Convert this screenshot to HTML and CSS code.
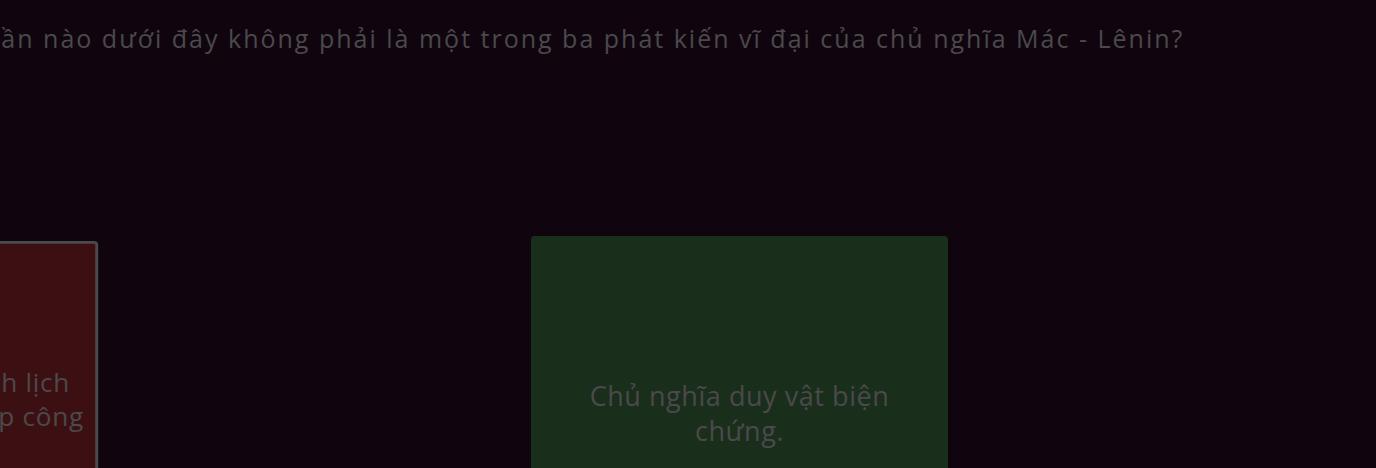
FILE: index.html
```html
<!DOCTYPE html>
<html lang="vi">
<head>
<meta charset="utf-8">
<title>Quiz</title>
<link rel="stylesheet" href="styles.css">
</head>
<body>
<main class="stage">
  <h1 class="question">Phần nào dưới đây không phải là một trong ba phát kiến vĩ đại của chủ nghĩa Mác - Lênin?</h1>
  <div class="answers">
    <div class="card card-wrong">
      <span class="card-text card-text-fixed">Học thuyết về sứ mệnh lịch<br>sử toàn cầu của giai cấp công<br>nhân.</span>
    </div>
    <div class="card card-hidden">
      <span class="card-text">Học thuyết về giá trị thặng dư.</span>
    </div>
    <div class="card card-correct">
      <span class="card-text">Chủ nghĩa duy vật biện chứng.</span>
    </div>
  </div>
</main>
</body>
</html>
```
FILE: styles.css
```css
html, body {
  margin: 0;
  padding: 0;
  background: #10050f;
  height: 100%;
  overflow: hidden;
}

.stage {
  font-family: "Open Sans", "Noto Sans", sans-serif;
  color: #4b494b;
  margin-left: -313px;
}

.question {
  margin: 0 0 0 280px;
  padding-top: 21px;
  font-size: 25px;
  font-weight: 400;
  line-height: 34px;
  letter-spacing: 2px;
  white-space: nowrap;
}

.answers {
  display: flex;
  gap: 5px;
  margin-top: 181px;
  align-items: flex-start;
}

.card {
  flex: 0 0 417px;
  width: 417px;
  min-width: 0;
  height: 353px;
  box-sizing: border-box;
  border-radius: 4px;
  display: flex;
  align-items: center;
  justify-content: center;
  text-align: center;
  padding: 0 30px;
  overflow: hidden;
}

.card-text {
  font-size: 27px;
  line-height: 35px;
  letter-spacing: 0.55px;
}

.card-text-fixed {
  white-space: nowrap;
  letter-spacing: 0.7px;
}

.card-wrong {
  background: #3c1012;
  border: 3px solid #4a4a4a;
  padding-top: 6px;
  transform: scale(0.972);
}

.card-hidden {
  visibility: hidden;
}

.card-correct {
  background: #1a2e1c;
}
```
